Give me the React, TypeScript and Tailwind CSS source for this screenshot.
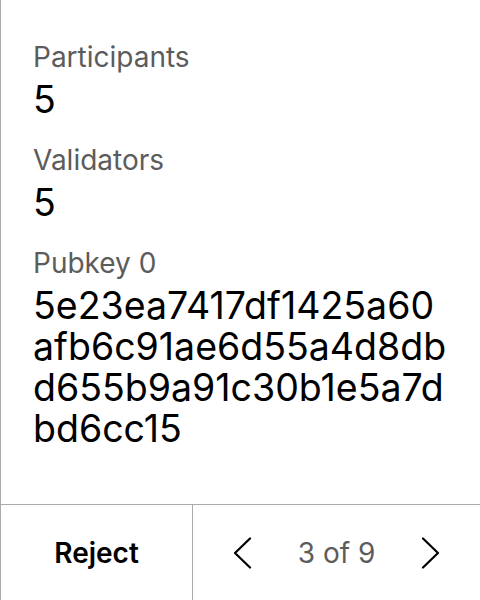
const FIELDS: { label: string; value: string }[] = [
  { label: "Participants", value: "5" },
  { label: "Validators", value: "5" },
  { label: "Pubkey 0", value: "5e23ea7417df1425a60afb6c91ae6d55a4d8dbd655b9a91c30b1e5a7dbd6cc15" },
];

// long hex values wrap every 19 characters, like the device screen does
function chunk(s: string, n = 19): string[] {
  const out: string[] = [];
  for (let i = 0; i < s.length; i += n) out.push(s.slice(i, i + n));
  return out;
}

function Chevron({ dir }: { dir: "left" | "right" }) {
  return (
    <svg width="20" height="32" viewBox="0 0 20 32" fill="none" stroke="black" strokeWidth="2.2" strokeLinecap="round" strokeLinejoin="round">
      {dir === "left" ? <polyline points="17,1.5 2,16 17,30.5" /> : <polyline points="3,1.5 18,16 3,30.5" />}
    </svg>
  );
}

export default function App() {
  return (
    <div
      className="flex h-[600px] w-[480px] flex-col border-l border-[#ababab] bg-white text-black"
      style={{ fontFamily: "Inter, 'Noto Sans', sans-serif" }}
    >
      <div className="flex flex-1 flex-col gap-[23px] pl-[32px] pr-[20px] pt-[40px]">
        {FIELDS.map((f) => (
          <div key={f.label}>
            <div className="mb-[5px] text-[28px] leading-[34px] text-[#5c5c5c]">{f.label}</div>
            <div className="text-[37.5px] leading-[41px]">
              {chunk(f.value).map((line, i) => (
                <div key={i} className="whitespace-nowrap">
                  {line}
                </div>
              ))}
            </div>
          </div>
        ))}
      </div>

      <div className="flex h-[96px] shrink-0 border-t border-[#ababab]">
        <button className="flex w-[192px] items-center justify-center border-r border-[#ababab] text-[28px] font-semibold">
          Reject
        </button>
        <div className="flex flex-1 items-center justify-center gap-[45px]">
          <Chevron dir="left" />
          <span className="text-[28px] text-[#5c5c5c]">3 of 9</span>
          <Chevron dir="right" />
        </div>
      </div>
    </div>
  );
}
